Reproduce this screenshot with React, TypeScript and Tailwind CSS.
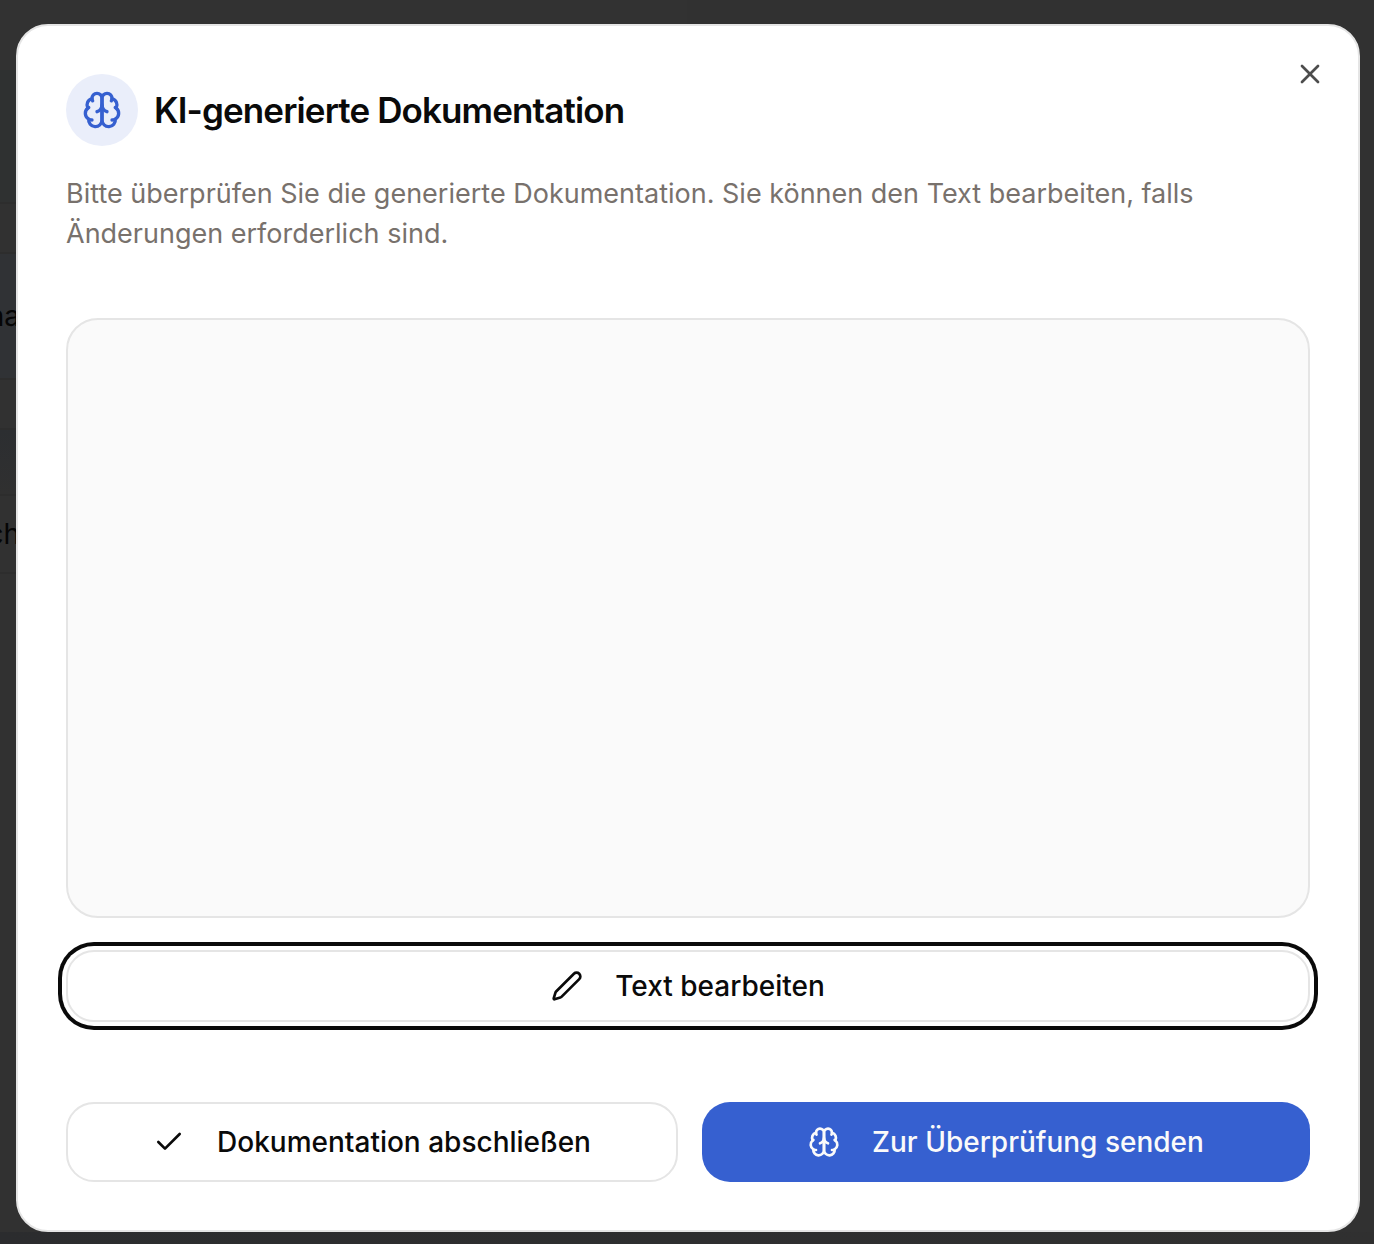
import React from "react";
import { Check, Pen, X } from "lucide-react";

function BrainIcon({ className }: { className?: string }) {
  return (
    <svg
      viewBox="0 0 24 24"
      fill="none"
      stroke="currentColor"
      strokeWidth={2}
      strokeLinecap="round"
      strokeLinejoin="round"
      aria-hidden="true"
      className={className}
    >
      <path d="M12 5a3 3 0 1 0-5.997.125 4 4 0 0 0-2.526 5.77 4 4 0 0 0 .556 6.588A4 4 0 1 0 12 18Z" />
      <path d="M12 5a3 3 0 1 1 5.997.125 4 4 0 0 1 2.526 5.77 4 4 0 0 1-.556 6.588A4 4 0 1 1 12 18Z" />
      <path d="M15 13a4.5 4.5 0 0 1-3-4 4.5 4.5 0 0 1-3 4" />
      <path d="M17.599 6.5a3 3 0 0 0 .399-1.375" />
      <path d="M6.003 5.125A3 3 0 0 0 6.401 6.5" />
      <path d="M3.477 10.896a4 4 0 0 1 .585-.396" />
      <path d="M19.938 10.5a4 4 0 0 1 .585.396" />
      <path d="M6 18a4 4 0 0 1-1.967-.516" />
      <path d="M19.967 17.484A4 4 0 0 1 18 18" />
    </svg>
  );
}

/* Dimmed page that stays visible around the dialog. */
function Backdrop() {
  return (
    <div
      aria-hidden="true"
      className="absolute inset-0 flex flex-col overflow-hidden bg-[#313131] text-[28px] leading-10 text-[#050505]"
    >
      <div className="flex w-1/2 grow flex-col">
        <div className="h-[70px] shrink-0 bg-[#323232]" />
        <div className="h-[132px] shrink-0 bg-[#2f3131]" />
        <div className="h-[50px] shrink-0 border-t-2 border-[#2d2d2d]" />
        <div className="flex h-[126px] shrink-0 items-center border-t-2 border-[#2d2d2d] bg-[#303235]">
          <span className="flex w-5 justify-end">na</span>
        </div>
        <div className="h-[52px] shrink-0 border-y-2 border-[#2d2d2d]" />
        <div className="h-16 shrink-0 bg-linear-to-b from-[#2c2e31] to-[#303030]" />
        <div className="flex h-20 shrink-0 items-center border-y-2 border-[#2d2d2d]">
          <span className="flex w-5 justify-end">ch</span>
        </div>
      </div>
      <div className="h-3 shrink-0 bg-linear-to-r from-[#2b2c2e] to-[#303030]" />
    </div>
  );
}

const buttonBase =
  "flex items-center justify-center gap-8 rounded-[28px] px-8 text-[28px] leading-10 font-medium";

export default function App() {
  return (
    <div className="relative min-h-screen bg-[#313131] pt-6 pr-3.5 pb-3 pl-4 font-['Inter',sans-serif] text-[#0a0a0a]">
      <Backdrop />
      <div
        role="dialog"
        aria-modal="true"
        aria-labelledby="dialog-title"
        aria-describedby="dialog-description"
        className="relative flex flex-col rounded-[32px] border-2 border-[#e5e5e5] bg-white p-12"
      >
        <button
          type="button"
          aria-label="Schließen"
          className="absolute top-8 right-8 text-[#4d4d4d]"
        >
          <X className="size-8" strokeWidth={2} />
        </button>

        <header className="flex flex-col gap-7">
          <div className="flex items-center gap-4">
            <span className="flex size-[72px] items-center justify-center rounded-full bg-[#eaeefa] text-[#3660d0]">
              <BrainIcon className="size-10" />
            </span>
            <h2
              id="dialog-title"
              className="text-[35px] leading-10 font-semibold tracking-tight"
            >
              KI-generierte Dokumentation
            </h2>
          </div>
          <p id="dialog-description" className="text-[27px] leading-10 text-[#78716c]">
            Bitte überprüfen Sie die generierte Dokumentation. Sie können den Text bearbeiten, falls
            Änderungen erforderlich sind.
          </p>
        </header>

        <div
          role="region"
          aria-label="Generierte Dokumentation"
          className="mt-16 min-h-[600px] rounded-[32px] border-2 border-[#e5e5e5] bg-[#fafafa]"
        />

        <button
          type="button"
          className={`${buttonBase} mt-8 h-[72px] border-2 border-[#e5e5e5] bg-white ring-4 ring-[#0a0a0a] ring-offset-4 ring-offset-white`}
        >
          <Pen className="size-8" />
          Text bearbeiten
        </button>

        <footer className="mt-20 flex gap-6">
          <button
            type="button"
            className={`${buttonBase} h-20 flex-1 border-2 border-[#e5e5e5] bg-white`}
          >
            <Check className="size-8" />
            Dokumentation abschließen
          </button>
          <button
            type="button"
            className={`${buttonBase} h-20 flex-1 bg-[#3660d0] text-[#fafafa]`}
          >
            <BrainIcon className="size-8" />
            Zur Überprüfung senden
          </button>
        </footer>
      </div>
    </div>
  );
}
